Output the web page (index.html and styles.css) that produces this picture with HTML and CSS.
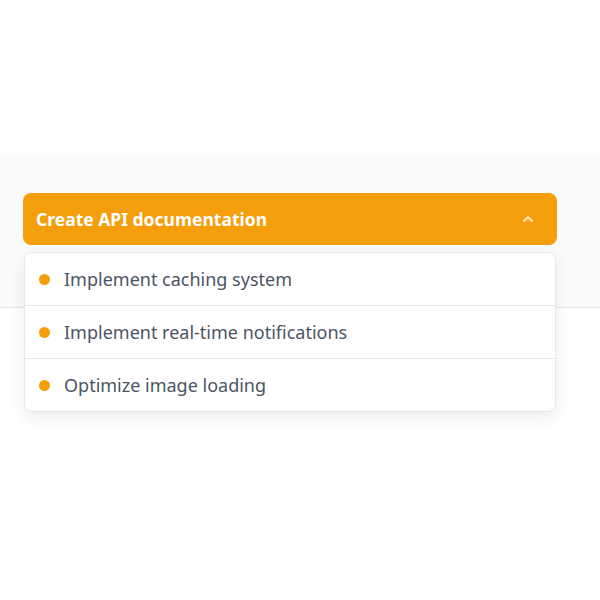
FILE: index.html
```html
<!DOCTYPE html>
<html lang="en">
<head>
    <meta charset="UTF-8">
    <title>Task dropdown</title>
    <link rel="stylesheet" href="styles.css">
</head>
<body>
    <div class="top-space"></div>

    <section class="panel">
        <div class="dropdown">
            <button class="dropdown-toggle" type="button">
                <span class="toggle-label">Create API documentation</span>
                <svg class="chevron" viewBox="0 0 12 12" aria-hidden="true">
                    <polyline points="2,8 6,4 10,8"></polyline>
                </svg>
            </button>

            <ul class="dropdown-menu">
                <li class="menu-item"><span class="dot"></span>Implement caching system</li>
                <li class="menu-item"><span class="dot"></span>Implement real-time notifications</li>
                <li class="menu-item"><span class="dot"></span>Optimize image loading</li>
            </ul>
        </div>
    </section>
</body>
</html>
```

FILE: styles.css
```css
html, body {
    min-height: 100%;
}

body {
    margin: 0;
    min-height: 600px;
    background: #ffffff;
    font-family: "Noto Sans", "Open Sans", Arial, sans-serif;
}

.top-space {
    height: 155px;
}

/* gray band behind the dropdown */
.panel {
    height: 153px;
    box-sizing: border-box;
    padding: 38px 43px 0 23px;
    background: #f9fafb;
    border-bottom: 1px solid #e5e7eb;
}

.dropdown {
    position: relative;
}

.dropdown-toggle {
    width: 100%;
    height: 52px;
    display: flex;
    align-items: center;
    justify-content: space-between;
    padding: 0 23px 0 13px;
    border: none;
    border-radius: 8px;
    background: #f59e0b;
    color: #ffffff;
    font-family: inherit;
    font-size: 17.5px;
    font-weight: 700;
    cursor: pointer;
}

.chevron {
    width: 12px;
    height: 12px;
    fill: none;
    stroke: #fde9c4;
    stroke-width: 2.2;
    stroke-linecap: round;
    stroke-linejoin: round;
}

.dropdown-menu {
    position: absolute;
    top: 59px;
    left: 1px;
    right: 1px;
    z-index: 10;
    margin: 0;
    padding: 0;
    list-style: none;
    background: #ffffff;
    border: 1px solid #e5e7eb;
    border-radius: 8px;
    box-shadow: 0 6px 16px rgba(0, 0, 0, 0.08);
}

.menu-item {
    height: 52px;
    display: flex;
    align-items: center;
    gap: 14px;
    padding: 0 14px;
    font-size: 18px;
    color: #4b5563;
    border-bottom: 1px solid #e5e7eb;
}

.menu-item:last-child {
    border-bottom: none;
}

.dot {
    width: 11px;
    height: 11px;
    border-radius: 50%;
    background: #f59e0b;
}
```
